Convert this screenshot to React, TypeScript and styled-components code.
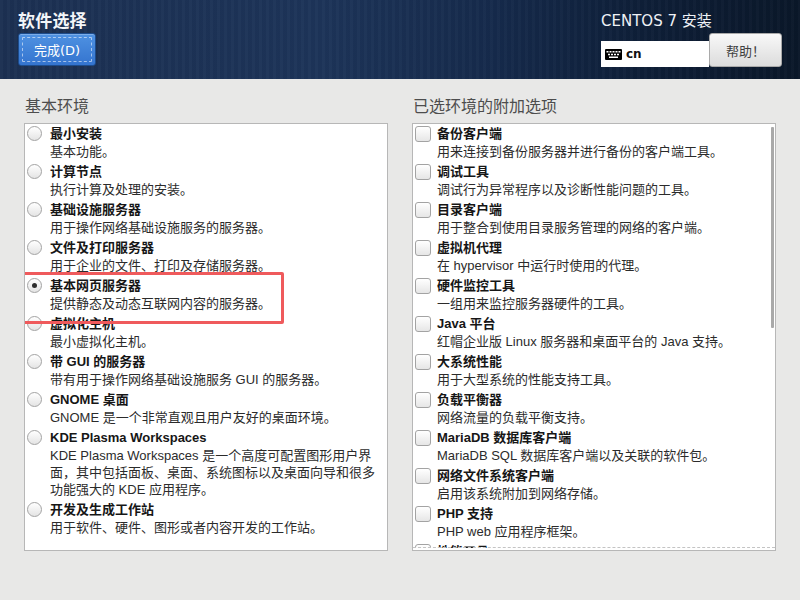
import React from "react";
import styled, { createGlobalStyle } from "styled-components";

const GlobalStyle = createGlobalStyle`
  html, body { margin: 0; padding: 0; }
  body {
    background: #e8e8e7;
    width: 800px;
    height: 600px;
    overflow: hidden;
    font-family: "DejaVu Sans", "Noto Sans CJK SC", sans-serif;
  }
`;

const Header = styled.header`
  height: 79px;
  display: flex;
  justify-content: space-between;
  padding: 0 18px;
  box-sizing: border-box;
  background:
    repeating-linear-gradient(90deg, rgba(255,255,255,0.018) 0px, rgba(255,255,255,0.018) 3px, rgba(0,0,0,0.02) 3px, rgba(0,0,0,0.02) 7px),
    linear-gradient(90deg, #1c3052 0%, #1d3459 40%, #152a4b 62%, #0e1f38 80%, #0a1729 100%);
`;

const HeadLeft = styled.div`
  display: flex;
  flex-direction: column;
  align-items: flex-start;
  padding-top: 11px;
  gap: 2px;
`;

const PageTitle = styled.h1`
  margin: 0;
  font-size: 17px;
  line-height: 20px;
  font-weight: bold;
  color: #f4f6f9;
  letter-spacing: 0.2px;
`;

const DoneButton = styled.button`
  position: relative;
  width: 78px;
  height: 33px;
  border: 1px solid #1d4c8c;
  border-radius: 3px;
  background: linear-gradient(#4f92e2, #3474cf);
  color: #ffffff;
  font-family: "DejaVu Sans", "Noto Sans CJK SC", sans-serif;
  font-size: 13px;
  padding: 0;
  box-shadow: inset 0 1px 0 rgba(255,255,255,0.25);
  &::after {
    content: "";
    position: absolute;
    inset: 3px;
    border: 1px dashed rgba(255, 255, 255, 0.55);
    border-radius: 1px;
  }
`;

const HeadRight = styled.div`
  display: flex;
  flex-direction: column;
  align-items: flex-start;
  padding-top: 12px;
`;

const Product = styled.div`
  font-size: 15px;
  line-height: 18px;
  color: #eef1f5;
`;

const ControlRow = styled.div`
  display: flex;
  align-items: flex-end;
  margin-top: 3px;
`;

const KeyboardBox = styled.div`
  width: 108px;
  height: 26px;
  background: #ffffff;
  display: flex;
  align-items: center;
  gap: 4px;
  padding-left: 4px;
  box-sizing: border-box;
  font-size: 12px;
  font-weight: bold;
  color: #111;
`;

const HelpButton = styled.button`
  width: 73px;
  height: 34px;
  border: 1px solid #a9a9a9;
  border-radius: 3px;
  background: linear-gradient(#f8f8f8, #dcdcdc);
  color: #404040;
  font-family: "Noto Sans CJK SC", sans-serif;
  font-size: 13px;
  padding: 0;
`;

const Main = styled.main`
  display: grid;
  grid-template-columns: 364px 364px;
  column-gap: 24px;
  padding: 18px 24px 0 24px;
`;

const Column = styled.section`
  display: flex;
  flex-direction: column;
`;

const SectionLabel = styled.h2`
  margin: 0 0 6px 1px;
  font-size: 16px;
  line-height: 20px;
  font-weight: normal;
  color: #4d4d4d;
`;

const ListBox = styled.div`
  position: relative;
  height: 428px;
  box-sizing: border-box;
  border: 1px solid #b7b7b7;
  padding-top: 1px;
  background: #ffffff;
  overflow: hidden;
  font-family: "Liberation Sans", "Noto Sans CJK SC", sans-serif;
`;

const Item = styled.div<{ $indent: number }>`
  position: relative;
  display: grid;
  grid-template-columns: ${(p) => p.$indent}px 1fr;
  padding-bottom: 3px;
`;

const Radio = styled.span<{ $checked?: boolean }>`
  position: relative;
  margin: 1px 0 0 2px;
  width: 15px;
  height: 15px;
  box-sizing: border-box;
  border-radius: 50%;
  border: 1px solid #a3a3a3;
  background: linear-gradient(#ffffff, #e4e4e4);
  &::after {
    content: "";
    display: ${(p) => (p.$checked ? "block" : "none")};
    position: absolute;
    left: 4px;
    top: 4px;
    width: 5px;
    height: 5px;
    border-radius: 50%;
    background: #2e2e2e;
  }
`;

const Check = styled.span`
  margin: 1px 0 0 2px;
  width: 16px;
  height: 16px;
  box-sizing: border-box;
  border-radius: 3px;
  border: 1px solid #a3a3a3;
  background: linear-gradient(#ffffff, #e6e6e6);
`;

const ItemText = styled.div`
  display: flex;
  flex-direction: column;
`;

const ItemTitle = styled.div`
  font-size: 13px;
  line-height: 18px;
  font-weight: bold;
  color: #161616;
  white-space: nowrap;
`;

const ItemDesc = styled.div`
  font-size: 13px;
  line-height: 17px;
  color: #2b2b2b;
  white-space: nowrap;
`;

const Highlight = styled.div`
  position: absolute;
  left: -5px;
  top: -5px;
  width: 264px;
  height: 52px;
  box-sizing: border-box;
  border: 3px solid #ef5a5c;
  border-radius: 2px;
  pointer-events: none;
  z-index: 2;
`;

const ScrollThumb = styled.div`
  position: absolute;
  right: 1px;
  top: 3px;
  width: 3px;
  height: 201px;
  background: #a9a9a9;
  border-radius: 1px;
`;

const Undershoot = styled.div`
  position: absolute;
  left: 0;
  right: 0;
  bottom: 2px;
  height: 0;
  border-top: 1px dashed #c4c4c4;
`;

const Fade = styled.div`
  position: absolute;
  left: 0;
  right: 0;
  bottom: 0;
  height: 2px;
  background: #ffffff;
`;

const KeyboardIcon = () => (
  <svg width="17" height="11" viewBox="0 0 17 11">
    <rect x="0" y="0" width="17" height="11" rx="1" fill="#000" />
    {[2, 5, 8, 11, 14].map((x) => (
      <rect key={"a" + x} x={x - 0.5} y="2" width="2" height="1.5" fill="#fff" />
    ))}
    {[3.5, 6.5, 9.5, 12.5].map((x) => (
      <rect key={"b" + x} x={x - 0.5} y="4.75" width="2" height="1.5" fill="#fff" />
    ))}
    <rect x="4" y="7.5" width="9" height="1.5" fill="#fff" />
  </svg>
);

type Entry = { title: string; desc: string[]; checked?: boolean; mark?: boolean };

const environments: Entry[] = [
  { title: "最小安装", desc: ["基本功能。"] },
  { title: "计算节点", desc: ["执行计算及处理的安装。"] },
  { title: "基础设施服务器", desc: ["用于操作网络基础设施服务的服务器。"] },
  { title: "文件及打印服务器", desc: ["用于企业的文件、打印及存储服务器。"] },
  { title: "基本网页服务器", desc: ["提供静态及动态互联网内容的服务器。"], checked: true, mark: true },
  { title: "虚拟化主机", desc: ["最小虚拟化主机。"] },
  { title: "带 GUI 的服务器", desc: ["带有用于操作网络基础设施服务 GUI 的服务器。"] },
  { title: "GNOME 桌面", desc: ["GNOME 是一个非常直观且用户友好的桌面环境。"] },
  {
    title: "KDE Plasma Workspaces",
    desc: [
      "KDE Plasma Workspaces 是一个高度可配置图形用户界",
      "面，其中包括面板、桌面、系统图标以及桌面向导和很多",
      "功能强大的 KDE 应用程序。",
    ],
  },
  { title: "开发及生成工作站", desc: ["用于软件、硬件、图形或者内容开发的工作站。"] },
];

const addons: Entry[] = [
  { title: "备份客户端", desc: ["用来连接到备份服务器并进行备份的客户端工具。"] },
  { title: "调试工具", desc: ["调试行为异常程序以及诊断性能问题的工具。"] },
  { title: "目录客户端", desc: ["用于整合到使用目录服务管理的网络的客户端。"] },
  { title: "虚拟机代理", desc: ["在 hypervisor 中运行时使用的代理。"] },
  { title: "硬件监控工具", desc: ["一组用来监控服务器硬件的工具。"] },
  { title: "Java 平台", desc: ["红帽企业版 Linux 服务器和桌面平台的 Java 支持。"] },
  { title: "大系统性能", desc: ["用于大型系统的性能支持工具。"] },
  { title: "负载平衡器", desc: ["网络流量的负载平衡支持。"] },
  { title: "MariaDB 数据库客户端", desc: ["MariaDB SQL 数据库客户端以及关联的软件包。"] },
  { title: "网络文件系统客户端", desc: ["启用该系统附加到网络存储。"] },
  { title: "PHP 支持", desc: ["PHP web 应用程序框架。"] },
  { title: "性能工具", desc: ["用于诊断系统和程序级别性能问题的工具。"] },
];

export default function App() {
  return (
    <>
      <GlobalStyle />
      <Header>
        <HeadLeft>
          <PageTitle>软件选择</PageTitle>
          <DoneButton>完成(D)</DoneButton>
        </HeadLeft>
        <HeadRight>
          <Product>CENTOS 7 安装</Product>
          <ControlRow>
            <KeyboardBox>
              <KeyboardIcon />
              <span>cn</span>
            </KeyboardBox>
            <HelpButton>帮助！</HelpButton>
          </ControlRow>
        </HeadRight>
      </Header>
      <Main>
        <Column>
          <SectionLabel>基本环境</SectionLabel>
          <ListBox>
            {environments.map((e) => (
              <Item key={e.title} $indent={25}>
                <Radio $checked={e.checked} />
                <ItemText>
                  <ItemTitle>{e.title}</ItemTitle>
                  {e.desc.map((d) => (
                    <ItemDesc key={d}>{d}</ItemDesc>
                  ))}
                </ItemText>
                {e.mark && <Highlight />}
              </Item>
            ))}
          </ListBox>
        </Column>
        <Column>
          <SectionLabel>已选环境的附加选项</SectionLabel>
          <ListBox>
            {addons.map((e) => (
              <Item key={e.title} $indent={24}>
                <Check />
                <ItemText>
                  <ItemTitle>{e.title}</ItemTitle>
                  {e.desc.map((d) => (
                    <ItemDesc key={d}>{d}</ItemDesc>
                  ))}
                </ItemText>
              </Item>
            ))}
            <Fade />
            <Undershoot />
            <ScrollThumb />
          </ListBox>
        </Column>
      </Main>
    </>
  );
}
